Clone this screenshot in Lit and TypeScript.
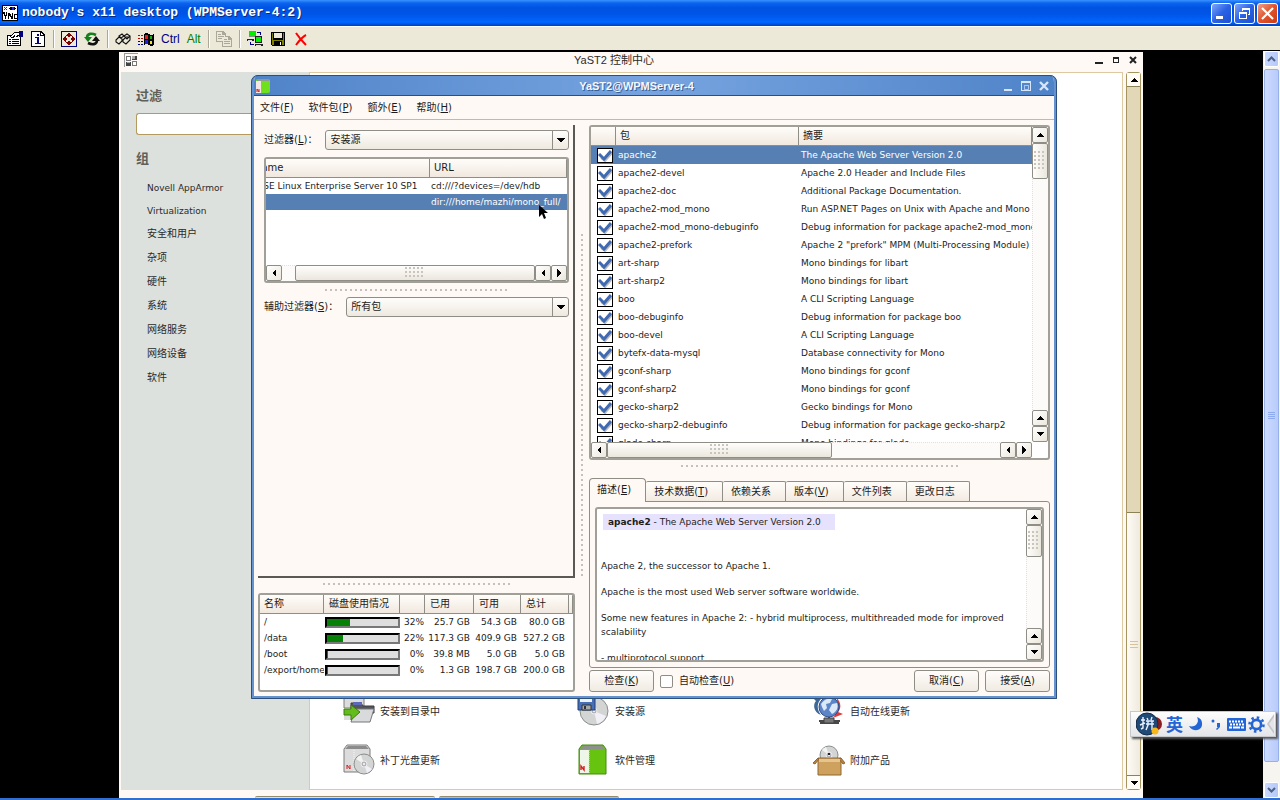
import { LitElement, html, css, svg } from "lit";
import { customElement, state } from "lit/decorators.js";
import { classMap } from "lit/directives/class-map.js";
import { styleMap } from "lit/directives/style-map.js";

const packages: [string, string][] = [
  ["apache2", "The Apache Web Server Version 2.0"],
  ["apache2-devel", "Apache 2.0 Header and Include Files"],
  ["apache2-doc", "Additional Package Documentation."],
  ["apache2-mod_mono", "Run ASP.NET Pages on Unix with Apache and Mono"],
  ["apache2-mod_mono-debuginfo", "Debug information for package apache2-mod_mono"],
  ["apache2-prefork", 'Apache 2 "prefork" MPM (Multi-Processing Module)'],
  ["art-sharp", "Mono bindings for libart"],
  ["art-sharp2", "Mono bindings for libart"],
  ["boo", "A CLI Scripting Language"],
  ["boo-debuginfo", "Debug information for package boo"],
  ["boo-devel", "A CLI Scripting Language"],
  ["bytefx-data-mysql", "Database connectivity for Mono"],
  ["gconf-sharp", "Mono bindings for gconf"],
  ["gconf-sharp2", "Mono bindings for gconf"],
  ["gecko-sharp2", "Gecko bindings for Mono"],
  ["gecko-sharp2-debuginfo", "Debug information for package gecko-sharp2"],
  ["glade-sharp", "Mono bindings for glade"],
];

const disks: [string, number, string, string, string][] = [
  ["/", 32, "25.7 GB", "54.3 GB", "80.0 GB"],
  ["/data", 22, "117.3 GB", "409.9 GB", "527.2 GB"],
  ["/boot", 0, "39.8 MB", "5.0 GB", "5.0 GB"],
  ["/export/home", 0, "1.3 GB", "198.7 GB", "200.0 GB"],
];

const mnemonic = (text: string, key?: string) =>
  key ? html`${text}(<u>${key}</u>)` : html`${text}`;

const shared = css`
  * { box-sizing: border-box; }
  button, input, select { font: inherit; color: inherit; margin: 0; }
  button { padding: 0; border: 0; background: none; }
  svg { display: block; }
  u { text-underline-offset: 1px; }
`;

/* ---------- scroll bar of the Qt theme ---------- */
@customElement("qt-scrollbar")
class QtScrollbar extends LitElement {
  static properties = {
    orient: { reflect: true },
    before: { type: Number },
    thumb: { type: Number },
  };
  declare orient: string;
  declare before: number;
  declare thumb: number;
  constructor() {
    super();
    this.orient = "v";
    this.before = 0;
    this.thumb = 30;
  }
  static styles = [shared, css`
    :host { display: flex; flex-direction: column; width: 16px; background: #fdfbf9; }
    :host([orient="h"]) { flex-direction: row; width: auto; height: 16px; }
    button, .thumb { flex: none; border: 1px solid #8f8e86; border-radius: 2px; background: linear-gradient(135deg, #fff, #ece7dd); display: grid; place-items: center; }
    button { width: 16px; height: 16px; }
    .thumb { width: 16px; background: linear-gradient(90deg, #fffefc, #ebe7de); }
    :host([orient="h"]) .thumb { width: auto; height: 16px; background: linear-gradient(#fffefc, #ebe7de); }
    .grip { width: 12px; height: 20px; background: radial-gradient(circle at 1px 1px, #c9c5bd 1px, transparent 1px) 0 0 / 4px 4px; }
    :host([orient="h"]) .grip { width: 20px; height: 12px; }
    .space { flex: 1; border-left: 1px dotted #e6e0d8; }
    :host([orient="h"]) .space, :host([orient="h"]) .gap { border-left: 0; border-top: 1px dotted #e6e0d8; }
    .gap { flex: none; }
  `];
  arrow(d: string) {
    return html`<svg width="8" height="8" viewBox="0 0 8 8" shape-rendering="crispEdges"><path d=${d} fill="#000" /></svg>`;
  }
  render() {
    const h = this.orient === "h";
    const back = h ? "M6 0v8L2 4z" : "M0 6h8L4 2z";
    const forward = h ? "M2 0v8l4-4z" : "M0 2h8L4 6z";
    const axis = h ? "width" : "height";
    return html`
      <button aria-label="后退">${this.arrow(back)}</button>
      <div class="gap" style=${styleMap({ [axis]: this.before + "px" })}></div>
      <div class="thumb" style=${styleMap({ [axis]: this.thumb + "px" })}><div class="grip"></div></div>
      <div class="space"></div>
      <button aria-label="后退">${this.arrow(back)}</button>
      <button aria-label="前进">${this.arrow(forward)}</button>`;
  }
}

/* ---------- package manager window ---------- */
@customElement("package-manager")
class PackageManager extends LitElement {
  @state() selected = 0;
  static styles = [shared, css`
    :host { display: flex; flex-direction: column; background: #fff9f5; border: 3px solid #6593d0; border-top: 0; outline: 1px solid #2c4f7c; outline-offset: -1px; border-radius: 7px 7px 0 0; overflow: hidden; font: 10px/16px "DejaVu Sans", "Noto Sans CJK SC", sans-serif; color: #1c1c1c; }
    .title { flex: none; display: flex; align-items: center; height: 21px; padding: 0 5px 0 2px; margin: 0 -3px; border-top: 1px solid #2c4f7c; border-bottom: 1px solid #2c4f7c; background: linear-gradient(90deg, #4f83c8, #77a4e0 50%, #4f83c8); color: #f4f8ff; }
    .title .name { flex: 1; text-align: center; font: bold 11px/18px "Liberation Sans", sans-serif; text-shadow: 1px 1px #3a5f92; }
    .title .controls { display: flex; gap: 2px; }
    .title button { width: 16px; height: 16px; display: grid; place-items: center; }
    .menu { flex: none; display: flex; gap: 15px; height: 24px; padding: 0 6px; align-items: center; border-bottom: 1px solid #bdb9b4; }
    .body { flex: 1; min-height: 0; display: grid; grid-template-columns: 317px 14px minmax(0, 1fr); padding: 5px 4px 4px; }
    .left, .right { display: flex; flex-direction: column; min-height: 0; min-width: 0; }
    .filters { flex: 1; min-height: 0; display: flex; flex-direction: column; padding: 5px 4px 0 6px; border: solid #5a5954; border-width: 0 2px 2px 0; }
    .field { display: flex; align-items: center; gap: 8px; }
    .pick { position: relative; flex: 1; height: 20px; }
    .pick select { width: 100%; height: 20px; appearance: none; padding: 0 4px; border: 1px solid #8f8e86; border-radius: 3px; background: linear-gradient(#fffdfb, #eee9df); }
    .pick .arrow { position: absolute; right: 0; top: 0; width: 17px; height: 20px; border-left: 1px solid #8f8e86; display: grid; place-items: center; pointer-events: none; }
    .frame { border: 2px solid #a09f98; border-radius: 3px; background: #fff; overflow: hidden; }
    .sources { height: 126px; margin-top: 7px; display: flex; flex-direction: column; }
    .clip { flex: 1; min-height: 0; overflow: hidden; }
    table { border-collapse: separate; border-spacing: 0; table-layout: fixed; }
    th { font-weight: normal; text-align: left; height: 19px; padding: 0 4px; white-space: nowrap; overflow: hidden; border: solid #8f8e86; border-width: 0 1px 1px 0; background: linear-gradient(#fffdfa, #f1e8df); }
    td { padding: 0 2px; white-space: nowrap; overflow: hidden; font-size: 9px; }
    .on td { background: #5680b4; color: #fff; }
    .sources table { width: 317px; }
    .sources td { height: 16px; padding: 0 1px; }
    .hsplit { height: 3px; align-self: center; background: radial-gradient(circle at 1px 1px, #c6c0ba 1px, transparent 1px) 0 0 / 5px 3px; }
    .hsplit.a { width: 184px; margin: 6px 0 5px; }
    .hsplit.b { width: 188px; margin: 5px 0 7px; }
    .hsplit.c { width: 278px; margin: 5px 0 10px; }
    .vsplit { width: 3px; margin: 109px 0 114px 6px; background: radial-gradient(circle at 1px 1px, #c6c0ba 1px, transparent 1px) 0 0 / 3px 5px; }
    .disks { height: 99px; }
    .disks table { width: 100%; }
    .disks th:not(:first-child) { padding-left: 5px; }
    .disks td { height: 16px; text-align: right; padding: 0 4px 0 0; }
    .disks td:nth-child(3) { padding-right: 1px; }
    .disks td:first-child { text-align: left; padding: 0 0 0 4px; }
    .disks td:nth-child(2) { padding: 0 0 0 1px; }
    .bar { height: 11px; border: 2px solid #000; border-color: #000 #787878 #787878 #000; background: #dedede; }
    .bar div { height: 100%; background: #068006; }
    .packages { height: 335px; display: grid; grid-template: minmax(0, 1fr) 16px / minmax(0, 1fr) 16px; }
    .packages table { width: 100%; }
    .packages td { height: 18px; }
    .packages td:first-child { padding: 1px 0 0 6px; }
    .packages input { display: block; width: 16px; height: 15px; appearance: none; border: 1px solid #000; background: #fff; }
    .packages input:checked { background: #fff url("data:image/svg+xml,%3Csvg xmlns='http://www.w3.org/2000/svg' width='14' height='13'%3E%3Cpath d='M3 9l4 3 7-8' fill='none' stroke='%23bbb' stroke-width='2'/%3E%3Cpath d='M1 5l5 5 7-8' fill='none' stroke='%233f69b0' stroke-width='3'/%3E%3C/svg%3E") 0 0 no-repeat; }
    .tabs { display: flex; align-items: flex-end; height: 24px; margin-bottom: -1px; z-index: 1; }
    .tabs button { height: 20px; padding: 0 14px 0 8px; margin-bottom: 1px; white-space: nowrap; border: solid #8f8e86; border-width: 1px 1px 0 0; border-radius: 2px 2px 0 0; background: linear-gradient(#fffdfa, #f3ebe2); }
    .tabs button.front { height: 24px; margin: 0; border-width: 1px 1px 0 1px; border-radius: 4px 4px 0 0; background: #fff9f5; padding: 0 14px 2px 7px; }
    .panel { flex: 1; min-height: 0; border: 1px solid #8f8e86; border-radius: 0 3px 3px 3px; padding: 5px; display: flex; }
    .doc { flex: 1; display: grid; grid-template-columns: minmax(0, 1fr) 16px; }
    .text { overflow: hidden; padding: 5px 4px 0; font-size: 9px; line-height: 14px; }
    .text p { margin: 0 0 12px; }
    .text .head { width: 232px; height: 16px; line-height: 16px; padding: 0 5px; margin: 0 0 29px 2px; background: #e6e2fd; white-space: nowrap; }
    .actions { flex: none; display: flex; align-items: center; gap: 6px; margin-top: 2px; }
    .actions button { width: 65px; height: 22px; border: 1px solid #8f8e86; border-radius: 3px; background: linear-gradient(#fffdfb, #f0ebe2); }
    .actions input { appearance: none; width: 13px; height: 13px; border: 1px solid #8f8e86; border-radius: 2px; background: #fff; }
    .actions label { flex: 1; }
  `];

  firstUpdated() {
    const sources = this.renderRoot.querySelector(".sources .clip")!;
    sources.scrollLeft = sources.scrollWidth;
  }

  downArrow() {
    return html`<span class="arrow"><svg width="8" height="5" viewBox="0 0 8 5" shape-rendering="crispEdges"><path d="M0 0h8L4 5z" /></svg></span>`;
  }

  render() {
    return html`
      <header class="title">
        <svg width="20" height="18" viewBox="0 0 20 18"><rect x="3" y="2" width="14" height="14" rx="2" fill="#6fe01c" /><path d="M3 4h5v12H3z" fill="#f4e6e4" /><path d="M4 2h12v2H4z" fill="#8f9a90" /><path d="M4 15v-3l2 3v-3" stroke="#c22" fill="none" /></svg>
        <span class="name">YaST2@WPMServer-4</span>
        <span class="controls">
          <button aria-label="最小化"><svg width="10" height="10" viewBox="0 0 10 10" shape-rendering="crispEdges"><path d="M1 8h8v2H1z" fill="#d7e6fa" /></svg></button>
          <button aria-label="最大化"><svg width="10" height="10" viewBox="0 0 10 10" shape-rendering="crispEdges"><path d="M0 0h10v10H0zM1 2v7h8V2z" fill="#d7e6fa" fill-rule="evenodd" /><path d="M3 4h4v4H3z" fill="none" stroke="#a9c7ee" /></svg></button>
          <button aria-label="关闭"><svg width="10" height="10" viewBox="0 0 10 10"><path d="M1 1l8 8M9 1L1 9" stroke="#d7e6fa" stroke-width="2.4" /></svg></button>
        </span>
      </header>
      <nav class="menu">
        ${[["文件", "F"], ["软件包", "P"], ["额外", "E"], ["帮助", "H"]].map(([t, k]) => html`<button>${mnemonic(t, k)}</button>`)}
      </nav>
      <div class="body">
        <section class="left">
          <div class="filters">
            <div class="field">
              <label for="filter">${mnemonic("过滤器", "L")}：</label>
              <span class="pick"><select id="filter"><option>安装源</option></select>${this.downArrow()}</span>
            </div>
            <div class="frame sources">
              <div class="clip">
                <table>
                  <colgroup><col style="width:180px" /><col /></colgroup>
                  <thead><tr><th>Name</th><th>URL</th></tr></thead>
                  <tbody>
                    <tr><td>SUSE Linux Enterprise Server 10 SP1</td><td>cd:///?devices=/dev/hdb</td></tr>
                    <tr class="on"><td></td><td>dir:///home/mazhi/mono_full/</td></tr>
                  </tbody>
                </table>
              </div>
              <qt-scrollbar orient="h" .before=${13} .thumb=${240}></qt-scrollbar>
            </div>
            <div class="hsplit a"></div>
            <div class="field">
              <label for="second">${mnemonic("辅助过滤器", "S")}：</label>
              <span class="pick"><select id="second"><option>所有包</option></select>${this.downArrow()}</span>
            </div>
          </div>
          <div class="hsplit b"></div>
          <div class="frame disks">
            <table>
              <colgroup><col style="width:64px" /><col style="width:76px" /><col style="width:25px" /><col style="width:49px" /><col style="width:47px" /><col style="width:48px" /><col /></colgroup>
              <thead><tr><th>名称</th><th>磁盘使用情况</th><th></th><th>已用</th><th>可用</th><th>总计</th><th></th></tr></thead>
              <tbody>
                ${disks.map(([name, pct, used, free, total]) => html`
                  <tr>
                    <td>${name}</td>
                    <td><div class="bar"><div style=${styleMap({ width: Math.max(pct, 1) + "%" })}></div></div></td>
                    <td>${pct}%</td><td>${used}</td><td>${free}</td><td>${total}</td><td></td>
                  </tr>`)}
              </tbody>
            </table>
          </div>
        </section>
        <div class="vsplit"></div>
        <section class="right">
          <div class="frame packages">
            <div class="clip">
              <table>
                <colgroup><col style="width:25px" /><col style="width:183px" /><col /></colgroup>
                <thead><tr><th></th><th>包</th><th>摘要</th></tr></thead>
                <tbody>
                  ${packages.map(([name, summary], i) => html`
                    <tr class=${classMap({ on: i === this.selected })} @click=${() => (this.selected = i)}>
                      <td><input type="checkbox" checked aria-label=${name} /></td><td>${name}</td><td>${summary}</td>
                    </tr>`)}
                </tbody>
              </table>
            </div>
            <qt-scrollbar .thumb=${36}></qt-scrollbar>
            <qt-scrollbar orient="h" .thumb=${225}></qt-scrollbar>
          </div>
          <div class="hsplit c"></div>
          <nav class="tabs">
            ${[["描述", "E"], ["技术数据", "T"], ["依赖关系"], ["版本", "V"], ["文件列表"], ["更改日志"]].map(([t, k], i) => html`<button class=${i ? "" : "front"}>${mnemonic(t, k)}</button>`)}
          </nav>
          <div class="panel">
            <div class="frame doc">
              <div class="text">
                <p class="head"><b>apache2</b> - The Apache Web Server Version 2.0</p>
                <p>Apache 2, the successor to Apache 1.</p>
                <p>Apache is the most used Web server software worldwide.</p>
                <p>Some new features in Apache 2: - hybrid multiprocess, multithreaded mode for improved scalability</p>
                <p>- multiprotocol support</p>
              </div>
              <qt-scrollbar .thumb=${32}></qt-scrollbar>
            </div>
          </div>
          <div class="actions">
            <button>${mnemonic("检查", "K")}</button>
            <input id="auto" type="checkbox" /><label for="auto">${mnemonic("自动检查", "U")}</label>
            <button>${mnemonic("取消", "C")}</button>
            <button>${mnemonic("接受", "A")}</button>
          </div>
        </section>
      </div>`;
  }
}

/* ---------- 32px module icons of the control centre ---------- */
const disc = (x: number, y: number, r: number) => svg`
  <circle cx=${x} cy=${y} r=${r} fill="#d3d4d4" stroke="#8b8c8c" />
  <path d=${`M${x} ${y}L${x - r + 2} ${y - 5}A${r} ${r} 0 0 1 ${x - 3} ${y - r + 1}z`} fill="#f3f3f0" />
  <path d=${`M${x} ${y}L${x + r - 2} ${y + 5}A${r} ${r} 0 0 1 ${x + 3} ${y + r - 1}z`} fill="#f0f0f6" />
  <circle cx=${x} cy=${y} r="3" fill="#b4b3bb" stroke="#eee" /><circle cx=${x} cy=${y} r="1" fill="#fff" />`;
const box = svg`<path d="M2 5l3-4h20l3 4v23H2z" fill="#dcdcdc" stroke="#7d7d7d" /><path d="M3 5l3-3h18l3 3z" fill="#8c8c8c" /><path d="M12 6v22" stroke="#f8f8f8" stroke-dasharray="1 1" /><path d="M5 25v-4l3 4v-4" fill="none" stroke="#d21f1f" />`;
const moduleIcons: Record<string, unknown> = {
  dir: svg`<path d="M2 1h20v12H2z" fill="#dcdcdc" stroke="#7d7d7d" /><path d="M2 13h8v12H2z" fill="#dcdcdc" /><path d="M9 8h10l2 3h11v7H9z" fill="#55565a" stroke="#3c3c40" /><path d="M11 7h9v3h-9z" fill="#5c68b8" /><path d="M13 14h19l-4 13H9z" fill="#d9dadb" stroke="#77787a" /><path d="M2 14h7v-4l9 7-9 8v-5H2z" fill="#63bb1c" stroke="#3a7d0d" />`,
  patch: svg`${box}${disc(22, 20, 10)}`,
  source: svg`${disc(17, 16, 14)}<path d="M1 0h17v15H1z" fill="#476fb6" stroke="#253f76" /><path d="M3 0h12v7H3z" fill="#eef2fa" /><path d="M5 10h9v5H5z" fill="#a7a9ad" stroke="#333" /><path d="M7 11h2v3H7z" fill="#333" />`,
  soft: svg`<path d="M2 5l3-4h21l3 4v25H2z" fill="#66c411" stroke="#408d07" /><path d="M3 5l3-3h19l3 3z" fill="#8e918e" /><path d="M3 6h9v23H3z" fill="#eef6ea" /><path d="M12 6v23" stroke="#d5f0bd" stroke-dasharray="1 1" /><path d="M4 26v-4l3 4v-4" fill="none" stroke="#d21f1f" stroke-width="1.4" />`,
  online: svg`<path d="M1 3h9C4 8 5 15 9 20 1 17 1 9 4 6z" fill="#3d6797" /><path d="M24 2c6 6 5 12 2 15l5 2-10 4c5-6 6-13 3-21z" fill="#de3d3d" /><circle cx="17" cy="12" r="10" fill="#5b85c6" stroke="#324c86" /><path d="M9 9c3-5 7-6 11-5l-2 4-4 1 1 4-3 3-2-4zM20 9l5-1c2 5-1 9-5 11l-3-4z" fill="#dbe8f7" /><path d="M17 22v4M7 26h21M8 28h19" stroke="#484848" stroke-width="2" /><path d="M12 23h10v5H12z" fill="#777" stroke="#444" />`,
  addon: svg`${disc(17, 11, 9)}<path d="M17 11v-2" stroke="#222" stroke-width="2" /><path d="M6 14h23v17H6z" fill="#cfa15f" stroke="#8f6631" /><path d="M6 14L1 19l2 1 4-5zM29 14l4 5-2 1-4-5z" fill="#b88444" stroke="#8f6631" /><path d="M7 15h21v3H7z" fill="#e5c48d" />`,
};

/* ---------- control centre window ---------- */
@customElement("control-center")
class ControlCenter extends LitElement {
  static styles = [shared, css`
    :host { display: grid; grid-template: 20px minmax(0, 1fr) 8px / 191px minmax(0, 1fr) 20px; background: #fff9f5; font: 10px/16px "DejaVu Sans", "Noto Sans CJK SC", sans-serif; color: #2a2a2a; }
    .title { grid-column: 1 / -1; display: flex; align-items: center; padding: 0 2px 4px 5px; }
    .title .name { flex: 1; text-align: center; font: 11px/16px "Liberation Sans", "Noto Sans CJK SC", sans-serif; }
    .title .controls { display: flex; }
    .title button { width: 17px; height: 16px; display: grid; place-items: center; }
    aside { background: #dde1dd; margin-left: 2px; padding: 14px 0 0 15px; border-right: 1px solid #dfc9a0; overflow: hidden; }
    label, h2 { display: block; margin: 0; font-size: 13px; line-height: 20px; font-weight: bold; color: #5f605a; }
    aside input { display: block; width: 100%; height: 22px; margin: 7px 0 14px; border: 1px solid #b49a5e; border-right: 0; border-radius: 3px 0 0 3px; background: #fff; }
    ul { list-style: none; margin: 0; padding: 7px 0 0 11px; }
    li { height: 24px; line-height: 24px; }
    li.latin { height: 23px; font-size: 9px; }
    li a { color: inherit; text-decoration: none; }
    main { background: #fff; border: solid #dfc9a0; border-width: 1px 1px 1px 0; display: grid; grid-template-columns: repeat(3, 235px); grid-auto-rows: 49px; align-content: end; padding: 0 0 4px 32px; }
    main a { display: flex; align-items: center; gap: 5px; color: inherit; text-decoration: none; }
    .scroll { margin: 0 2px 0 3px; width: 15px; border: 1px solid #a5945f; border-radius: 3px; background: #e2d8b8; display: flex; flex-direction: column; }
    .scroll button { height: 14px; flex: none; display: grid; place-items: center; background: #fffcf6; border-bottom: 1px solid #8b8256; }
    .scroll button:last-child { border-bottom: 0; border-top: 1px solid #8b8256; }
    .scroll .track { flex: 427; }
    .scroll .thumb { flex: 263; display: grid; place-items: center; background: linear-gradient(90deg, #fdfbf5, #efeadf); border-top: 1px solid #8b8256; }
    .shelf { grid-column: 1 / -1; display: flex; align-items: flex-end; gap: 4px; padding-left: 136px; }
    .shelf div { width: 180px; height: 2px; border-top: 1px solid #958b6a; background: #e6dfce; border-radius: 3px 3px 0 0; }
    .shelf div + div { background: #cbb98b; }
  `];
  render() {
    const items: [string, string][] = [["dir", "安装到目录中"], ["source", "安装源"], ["online", "自动在线更新"], ["patch", "补丁光盘更新"], ["soft", "软件管理"], ["addon", "附加产品"]];
    const groups = ["Novell AppArmor", "Virtualization", "安全和用户", "杂项", "硬件", "系统", "网络服务", "网络设备", "软件"];
    return html`
      <header class="title">
        <svg width="14" height="14" viewBox="0 0 14 14" shape-rendering="crispEdges"><path d="M0 0h14v1H1v13H0z" fill="#999" /><path d="M2 3h5v5H2zM8 8h5v5H8z" fill="#777" /><path d="M3 4h3v3H3zM9 9h3v3H9z" fill="#fff" /><path d="M8 3h5v4H8zM2 9h5v4H2z" fill="#444" /><path d="M8 3h3v3H8zM3 9h3v1H3z" fill="#aaa" /></svg>
        <span class="name">YaST2 控制中心</span>
        <span class="controls">
          <button aria-label="最小化"><svg width="8" height="8" viewBox="0 0 8 8" shape-rendering="crispEdges"><path d="M0 6h8v2H0z" fill="#222" /></svg></button>
          <button aria-label="最大化"><svg width="6" height="6" viewBox="0 0 6 6" shape-rendering="crispEdges"><path d="M0 0h6v6H0zM1 2v3h4V2z" fill="#222" fill-rule="evenodd" /></svg></button>
          <button aria-label="关闭"><svg width="8" height="8" viewBox="0 0 8 8"><path d="M1 1l6 6M7 1L1 7" stroke="#222" stroke-width="2" /></svg></button>
        </span>
      </header>
      <aside>
        <label for="search">过滤</label>
        <input id="search" type="text" />
        <h2>组</h2>
        <ul>
          ${groups.map((t) => html`<li class=${/^[A-Z]/.test(t) ? "latin" : ""}><a href="#">${t}</a></li>`)}
        </ul>
      </aside>
      <main>
        ${items.map(([icon, name]) => html`<a href="#"><svg width="33" height="33" viewBox="0 0 33 33">${moduleIcons[icon]}</svg>${name}</a>`)}
      </main>
      <div class="scroll">
        <button aria-label="向上"><svg width="8" height="4" viewBox="0 0 8 4" shape-rendering="crispEdges"><path d="M0 4h8L4 0z" /></svg></button>
        <div class="track"></div>
        <div class="thumb"><svg width="8" height="7" viewBox="0 0 8 7" shape-rendering="crispEdges"><path d="M0 0h8v1H0zM0 3h8v1H0zM0 6h8v1H0z" fill="#d9c396" /></svg></div>
        <button aria-label="向下"><svg width="8" height="4" viewBox="0 0 8 4" shape-rendering="crispEdges"><path d="M0 0h8L4 4z" /></svg></button>
      </div>
      <div class="shelf"><div></div><div></div></div>`;
  }
}

/* ---------- toolbar glyphs of the VNC viewer ---------- */
const tool = (body: unknown) => html`<svg width="16" height="16" viewBox="0 0 16 16" shape-rendering="crispEdges">${body}</svg>`;
const tools = {
  options: tool(svg`<path d="M0 4h14v11H0z" fill="#000" /><path d="M1 5h12v9H1z" fill="#fff" /><path d="M2 8h2v1H2zM5 8h7v1H5zM2 10h2v1H2zM5 10h7v1H5zM2 12h2v1H2zM5 12h7v1H5z" fill="#000" /><path d="M12 0h4v6h-4z" fill="#000080" /><path d="M3 5h1V4h1V3h1V2h1V1h5v4h-1v1H9V5H8v1H7v1H4V6H3z" fill="#000" /><path d="M4 5h1V4h1V3h1V2h5v2h-2v1H8V4H7v1H6v1H4z" fill="#fff" />`),
  info: tool(svg`<path d="M1 0h10l4 4v12H1z" fill="#000" /><path d="M2 1h8v4h4v10H2z" fill="#fff" /><path d="M11 2l2 2h-2z" fill="#fff" /><path d="M7 3h2v2H7zM5 6h4v6h2v1H5v-1h2V7H5z" fill="#000080" />`),
  full: tool(svg`<path d="M0 0h16v16H0zM1 1v14h14V1z" fill="#000080" fill-rule="evenodd" /><path d="M7 2h2v1h1v1h1v1H9v1H7V5H5V4h1V3h1zM7 14h2v-1h1v-1h1v-1H9v-1H7v1H5v1h1v1h1zM2 7h1V6h1V5h1v2h1v2H5v2H4v-1H3V9H2zM14 7h-1V6h-1V5h-1v2h-1v2h1v2h1v-1h1V9h1z" fill="#800000" />`),
  refresh: html`<svg width="16" height="16" viewBox="0 0 16 16"><path d="M3 7c0-5 5-5 9-3" fill="none" stroke="#16801a" stroke-width="2.6" /><path d="M0 6h8L4 11z" fill="#16801a" /><path d="M13 9c0 5-5 5-9 3" fill="none" stroke="#111" stroke-width="2.6" /><path d="M8 10h8l-4-5z" fill="#111" /></svg>`,
  keys: html`<svg width="16" height="16" viewBox="0 0 16 16"><g fill="#ece9d8" stroke="#111" stroke-width="1.1"><path d="M4 5l3-2 2 2-3 2zM9 5l3-2 3 2-3 3zM1 9l3-3 3 2v2l-3 3-3-2zM8 9l3-3 4 0v3l-4 4-3-2z" /></g></svg>`,
  windows: tool(svg`<path d="M6 3c2-2 4-1 5 0 2 1 3 1 5 0v11c-2 1-4 1-5 0-2-1-3-1-5 0z" fill="#000" /><path d="M7 4h3v4H7z" fill="#e02020" /><path d="M12 5h2v3h-2z" fill="#10b010" /><path d="M7 9h3v4H7z" fill="#2020e0" /><path d="M12 10h2v3h-2z" fill="#f0e020" /><path d="M0 4h2v1H0zM3 4h2v1H3zM0 7h2v1H0zM3 7h2v1H3z" fill="#c00" /><path d="M0 10h2v1H0zM3 10h2v1H3zM0 13h2v1H0zM3 13h2v1H3z" fill="#00a" />`),
  copy: tool(svg`<g fill="#aca899"><path d="M0 0h7l3 3v8H0z" /><path d="M6 5h7l3 3v8H6z" /></g><g fill="#ece9d8"><path d="M1 1h5v3h3v6H1zM7 6h5v3h3v6H7z" /></g><path d="M2 3h3v1H2zM2 5h6v1H2zM2 7h4v1H2zM8 8h3v1H8zM8 10h6v1H8zM8 12h6v1H8z" fill="#aca899" />`),
  transfer: tool(svg`<path d="M2 0h7v6H2z" fill="#888" /><path d="M3 1h5v4H3z" fill="#00f000" /><path d="M8 5h7v7H8z" fill="#222" /><path d="M9 6h5v5H9z" fill="#00f000" /><path d="M0 8h7v2H0zM8 13h8v2H8z" fill="#222" /><path d="M1 9h4v1H1zM9 14h5v1H9z" fill="#ddd" /><path d="M10 1h4v3h-1V2h-3zM3 11h1v2h3v1H3z" fill="#000080" />`),
  save: tool(svg`<path d="M1 1h14v14H2l-1-1z" fill="#000" /><path d="M2 2h1v7h10V2h1v12H2z" fill="#808000" /><path d="M4 2h8v5H4z" fill="#ece9d8" /><path d="M4 10h8v5H4z" fill="#000" /><path d="M10 11h1v3h-1z" fill="#fff" />`),
  quit: html`<svg width="16" height="16" viewBox="0 0 16 16"><path d="M3 2c2 3 5 7 10 12M13 4C9 6 6 10 3 14" fill="none" stroke="#f00" stroke-width="2" /></svg>`,
};

@customElement("app-root")
class AppRoot extends LitElement {
  static styles = [shared, css`
    :host { box-sizing: border-box; display: flex; flex-direction: column; height: 100vh; overflow: hidden; border-bottom: 2px solid #2f6fd0; background: #000; }
    .caption { flex: none; display: flex; align-items: center; gap: 4px; height: 26px; padding: 0 2px; background: linear-gradient(#3a93ff, #0b63ee 12%, #0053e1 30%, #0055e8 55%, #0066ff 85%, #003fc0); color: #fff; }
    .caption h1 { flex: 1; margin: 0; font: bold 13px/22px "Liberation Mono", monospace; text-shadow: 1px 1px #0a2a80; }
    .caption .controls { display: flex; gap: 2px; }
    .caption button { width: 21px; height: 21px; border: 1px solid #fff; border-radius: 3px; display: grid; place-items: center; background: linear-gradient(135deg, #7ea6f8, #2a62e6 50%, #1c4fd0); }
    .caption button.close { background: linear-gradient(135deg, #f0a088, #e0532c 50%, #c83a14); }
    .tools { flex: none; display: flex; align-items: center; height: 24px; padding-left: 7px; gap: 7px; background: #ece9d8; border-top: 1px solid #fff; font: 12px/16px "Liberation Sans", sans-serif; }
    .tools hr { width: 2px; height: 18px; margin: 0 -1px 0 0; border: solid; border-width: 0 1px; border-color: #aca899 #fff #fff #aca899; }
    .ctrl { color: #000080; } .alt { color: #008000; }
    .view { flex: 1; min-height: 0; margin-top: 1px; display: grid; grid-template-columns: minmax(0, 1fr) 17px; position: relative; }
    .desk { position: relative; width: 1024px; margin: 1px 1px 0 0; justify-self: center; display: flex; }
    control-center { flex: 1; }
    package-manager { position: absolute; left: 132px; top: 23px; width: 806px; height: 624px; }
    .xp { display: flex; flex-direction: column; background: #f6f5f0; padding: 0 1px; gap: 2px; }
    .xp button { height: 16px; flex: none; border: 1px solid #fff; border-radius: 2px; background: linear-gradient(90deg, #cad9fe, #b5c8f8); display: grid; place-items: center; }
    .xp .thumb { flex: 1; border: 1px solid #98b0e8; border-radius: 2px; background: linear-gradient(90deg, #cbdafe, #b8cbfb); display: grid; place-items: center; }
    .xp .space { flex: none; height: 16px; }
    .ime { position: absolute; right: 4px; bottom: 61px; display: flex; align-items: center; gap: 4px; height: 26px; width: 146px; padding-left: 5px; background: linear-gradient(#fdfdfd, #e4e5e8); border: 1px solid #c6c8cc; box-shadow: 2px 2px 2px #555; color: #2365d4; font: bold 17px/22px "Noto Sans CJK SC", sans-serif; }
    .ime .mode { width: 17px; }
    .ime .tight { margin-left: -2px; }
    .pointer { position: absolute; left: 420px; top: 153px; }
  `];
  render() {
    return html`
      <header class="caption">
        <svg width="16" height="16" viewBox="0 0 16 16" shape-rendering="crispEdges"><path d="M0 0h16v16H0z" fill="#fff" stroke="#000" stroke-width="2" /><path d="M2 2l3 3M5 2L2 5" stroke="#c00" /><path d="M8 2h5v1h1v1h-1v1H8V4H7V3h1z" fill="#000" /><path d="M10 2h2v3h-2z" fill="#22f" /><path d="M1 7h2v3h1V7h1v4H4v3H3v-3H2V9H1zM6 8h2v1h1v2h1V8h1v6H9v-2H8v-1H7v3H6zM12 9h3v1h-2v3h2v1h-3z" fill="#000" /></svg>
        <h1>nobody's x11 desktop (WPMServer-4:2)</h1>
        <span class="controls">
          <button aria-label="最小化"><svg width="13" height="13" viewBox="0 0 13 13"><path d="M1 9h7v3H1z" fill="#fff" /></svg></button>
          <button aria-label="还原"><svg width="13" height="13" viewBox="0 0 13 13" shape-rendering="crispEdges"><path d="M4 1h8v7h-2V7h1V3H5v1H4zM1 5h8v7H1zM2 7v4h6V7z" fill="#fff" fill-rule="evenodd" /></svg></button>
          <button class="close" aria-label="关闭"><svg width="13" height="13" viewBox="0 0 13 13"><path d="M1 1l11 11M12 1L1 12" stroke="#fff" stroke-width="2.2" /></svg></button>
        </span>
      </header>
      <div class="tools">
        <button aria-label="选项">${tools.options}</button><button aria-label="信息">${tools.info}</button><hr />
        <button aria-label="全屏">${tools.full}</button><button aria-label="刷新">${tools.refresh}</button><hr />
        <button aria-label="发送按键">${tools.keys}</button><button aria-label="开始">${tools.windows}</button>
        <button class="ctrl">Ctrl</button><button class="alt">Alt</button><hr />
        <button aria-label="复制">${tools.copy}</button><hr />
        <button aria-label="传输">${tools.transfer}</button><button aria-label="保存">${tools.save}</button><button aria-label="断开">${tools.quit}</button>
      </div>
      <div class="view">
        <div class="desk">
          <control-center></control-center>
          <package-manager></package-manager>
          <svg class="pointer" width="9" height="15" viewBox="0 0 9 15"><path d="M0 0v12l3-3 2 5 2-1-2-5h4z" fill="#000" /></svg>
        </div>
        <div class="xp">
          <button aria-label="向上"><svg width="9" height="6" viewBox="0 0 9 6"><path d="M1 5l3.5-3.5L8 5" fill="none" stroke="#4d6185" stroke-width="2" /></svg></button>
          <div class="thumb"><svg width="7" height="8" viewBox="0 0 7 8" shape-rendering="crispEdges"><path d="M0 0h7v1H0zM0 2h7v1H0zM0 4h7v1H0zM0 6h7v1H0z" fill="#8fabf0" /></svg></div>
          <div class="space"></div>
          <button aria-label="向下"><svg width="9" height="6" viewBox="0 0 9 6"><path d="M1 1l3.5 3.5L8 1" fill="none" stroke="#4d6185" stroke-width="2" /></svg></button>
        </div>
        <div class="ime">
          <svg width="26" height="24" viewBox="0 0 26 24"><circle cx="19" cy="12" r="7" fill="#8f1c1c" /><circle cx="11" cy="12" r="11" fill="#1f4a78" stroke="#122b47" /><path d="M5 8h4M7 5v11l-2 1M4 13l5-2M11 6l1 2M16 5l-1 3M10 9h8M10 12h8M12 9v4l-2 5M16 9v9" stroke="#e9f2ff" stroke-width="1.4" fill="none" /><circle cx="19" cy="19" r="3.5" fill="#f6b91c" /></svg>
          <span class="mode">英</span>
          <svg width="16" height="15" viewBox="0 0 16 15"><path d="M10 0c3 6-2 11-8 9 4 7 14 5 13-3 0-3-2-5-5-6z" fill="#2365d4" /></svg>
          <svg width="16" height="14" viewBox="0 0 16 14"><circle cx="6" cy="4" r="1.5" fill="#2365d4" /><path d="M10 6h3v4l-3 3-1-1 2-2h-1z" fill="#2365d4" /></svg>
          <svg width="19" height="13" viewBox="0 0 19 13"><rect width="19" height="13" rx="1" fill="#2365d4" /><path d="M2 3.5h15M3 6.5h14" stroke="#fff" stroke-width="2" stroke-dasharray="2 1" /><path d="M2 9.5h3M6 9.5h7M14 9.5h3" stroke="#fff" stroke-width="2" /></svg>
          <svg class="tight" width="17" height="17" viewBox="0 0 17 17"><circle cx="8.5" cy="8.5" r="4.6" fill="none" stroke="#2365d4" stroke-width="2.6" /><circle cx="8.5" cy="8.5" r="7" fill="none" stroke="#2365d4" stroke-width="2.6" stroke-dasharray="2.5 3" /></svg>
          <svg class="tight" width="8" height="20" viewBox="0 0 8 20"><path d="M7 0v20L0 10z" fill="#c4c6ca" /><path d="M7 3v14L2 10z" fill="#e4e5e8" /></svg>
        </div>
      </div>`;
  }
}
